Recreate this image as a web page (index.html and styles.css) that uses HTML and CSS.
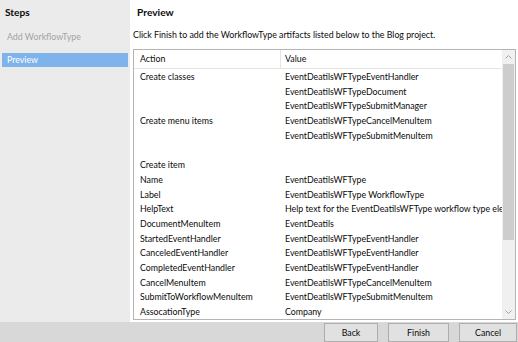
FILE: index.html
```html
<!DOCTYPE html>
<html lang="en">
<head>
    <meta charset="UTF-8">
    <title>Add WorkflowType - Preview</title>
    <link rel="stylesheet" href="styles.css">
</head>
<body>

<div class="wizard">
    <div class="main">
        <div class="steps">
            <div class="steps-title">Steps</div>
            <div class="step disabled">Add WorkflowType</div>
            <div class="step active">Preview</div>
        </div>

        <div class="content">
            <div class="page-title">Preview</div>
            <div class="description">Click Finish to add the WorkflowType artifacts listed below to the Blog project.</div>

            <div class="list-box">
                <div class="list">
                    <div class="row header">
                        <div class="cell action">Action</div>
                        <div class="cell value">Value</div>
                    </div>
                    <div class="row"><div class="cell action">Create classes</div><div class="cell value">EventDeatilsWFTypeEventHandler</div></div>
                    <div class="row"><div class="cell action"></div><div class="cell value">EventDeatilsWFTypeDocument</div></div>
                    <div class="row"><div class="cell action"></div><div class="cell value">EventDeatilsWFTypeSubmitManager</div></div>
                    <div class="row"><div class="cell action">Create menu items</div><div class="cell value">EventDeatilsWFTypeCancelMenuItem</div></div>
                    <div class="row"><div class="cell action"></div><div class="cell value">EventDeatilsWFTypeSubmitMenuItem</div></div>
                    <div class="row"><div class="cell action"></div><div class="cell value"></div></div>
                    <div class="row"><div class="cell action">Create item</div><div class="cell value"></div></div>
                    <div class="row"><div class="cell action">Name</div><div class="cell value">EventDeatilsWFType</div></div>
                    <div class="row"><div class="cell action">Label</div><div class="cell value">EventDeatilsWFType WorkflowType</div></div>
                    <div class="row"><div class="cell action">HelpText</div><div class="cell value">Help text for the EventDeatilsWFType workflow type ele</div></div>
                    <div class="row"><div class="cell action">DocumentMenuItem</div><div class="cell value">EventDeatils</div></div>
                    <div class="row"><div class="cell action">StartedEventHandler</div><div class="cell value">EventDeatilsWFTypeEventHandler</div></div>
                    <div class="row"><div class="cell action">CanceledEventHandler</div><div class="cell value">EventDeatilsWFTypeEventHandler</div></div>
                    <div class="row"><div class="cell action">CompletedEventHandler</div><div class="cell value">EventDeatilsWFTypeEventHandler</div></div>
                    <div class="row"><div class="cell action">CancelMenuItem</div><div class="cell value">EventDeatilsWFTypeCancelMenuItem</div></div>
                    <div class="row"><div class="cell action">SubmitToWorkflowMenuItem</div><div class="cell value">EventDeatilsWFTypeSubmitMenuItem</div></div>
                    <div class="row"><div class="cell action">AssocationType</div><div class="cell value">Company</div></div>
                </div>

                <div class="scrollbar">
                    <div class="arrow">
                        <svg width="7" height="4" viewBox="0 0 7 4"><path d="M0.5 3.5 L3.5 0.5 L6.5 3.5" fill="none" stroke="#a6a6a6" stroke-width="1"/></svg>
                    </div>
                    <div class="thumb"></div>
                    <div class="track"></div>
                    <div class="arrow">
                        <svg width="7" height="4" viewBox="0 0 7 4"><path d="M0.5 0.5 L3.5 3.5 L6.5 0.5" fill="none" stroke="#a6a6a6" stroke-width="1"/></svg>
                    </div>
                </div>
            </div>
        </div>
    </div>

    <div class="buttons">
        <button class="btn back">Back</button>
        <button class="btn finish">Finish</button>
        <button class="btn cancel">Cancel</button>
    </div>
</div>

</body>
</html>
```

FILE: styles.css
```css
body {
    margin: 0;
    font-family: Lato, "Noto Sans", sans-serif;
    font-size: 8.8px;
    color: #0a0a0a;
    background-color: #fff;
}
.wizard {
    width: 518px;
    height: 342px;
    display: flex;
    flex-direction: column;
}
.main {
    flex: 1;
    display: flex;
    min-height: 0;
}

/* left step list */
.steps {
    width: 130px;
    background-color: #ebebeb;
    padding: 4px 2px 0 2px;
    box-sizing: border-box;
}
.steps-title {
    font-weight: bold;
    font-size: 10.2px;
    height: 16px;
    line-height: 16px;
    padding-left: 3px;
    margin-bottom: 10px;
}
.step {
    height: 14px;
    line-height: 14px;
    padding-left: 5px;
}
.step.disabled {
    color: #a3a3a3;
    margin-bottom: 9px;
}
.step.active {
    background-color: #7eb3ec;
    color: #fff;
    width: 126px;
    box-sizing: border-box;
}

/* right side */
.content {
    flex: 1;
    padding: 4px 2px 2px 3px;
    display: flex;
    flex-direction: column;
    min-width: 0;
}
.page-title {
    font-weight: bold;
    font-size: 10.2px;
    line-height: 16px;
    padding-left: 4px;
    margin-bottom: 7px;
}
.description {
    line-height: 15px;
    margin-bottom: 7px;
    white-space: nowrap;
}
.list-box {
    flex: 1;
    display: flex;
    border: 1px solid #b4b4b4;
    min-height: 0;
}
.list {
    flex: 1;
    min-width: 0;
    overflow: hidden;
}
.row {
    display: flex;
    height: 14.7px;
    line-height: 14.7px;
}
.row.header {
    height: 18px;
    line-height: 18px;
    border-bottom: 1px solid #e5e5e5;
    margin-bottom: 1px;
}
.cell {
    white-space: nowrap;
    overflow: hidden;
}
.cell.action {
    width: 147px;
    padding-left: 6px;
    box-sizing: border-box;
    flex-shrink: 0;
}
.header .cell.action {
    border-right: 1px solid #e5e5e5;
}
.cell.value {
    flex: 1;
    padding-left: 4px;
}

/* scrollbar */
.scrollbar {
    width: 13px;
    display: flex;
    flex-direction: column;
    background-color: #f0f0f0;
}
.arrow {
    height: 14px;
    display: flex;
    align-items: center;
    justify-content: center;
}
.thumb {
    height: 176px;
    background-color: #cdcdcd;
    margin: 0 1px;
}
.track {
    flex: 1;
}

/* bottom buttons */
.buttons {
    height: 20px;
    background-color: #d8d8d8;
    display: flex;
    justify-content: flex-end;
    align-items: flex-end;
    gap: 10px;
    padding-right: 1px;
}
.btn {
    height: 19px;
    background-color: #e1e1e1;
    border: 1px solid #adadad;
    font-family: Lato, "Noto Sans", sans-serif;
    font-size: 8.8px;
    color: #0a0a0a;
    padding: 0;
    line-height: 15px;
}
.btn.back {
    width: 54px;
}
.btn.finish {
    width: 61px;
}
.btn.cancel {
    width: 58px;
}
```
